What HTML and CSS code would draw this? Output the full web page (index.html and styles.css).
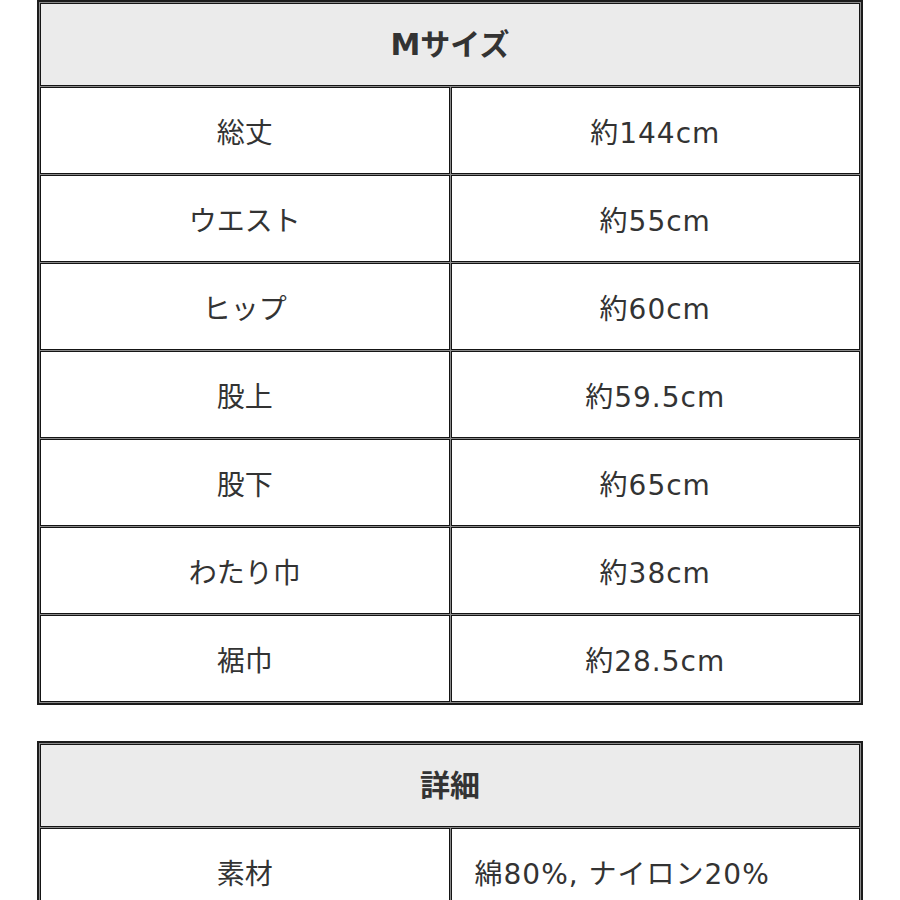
FILE: index.html
```html
<!DOCTYPE html>
<html lang="ja">
<head>
<meta charset="utf-8">
<link rel="stylesheet" href="styles.css">
</head>
<body>
<div class="page">
  <table class="spec">
    <tr><th colspan="2" class="head">Mサイズ</th></tr>
    <tr><td>総丈</td><td class="val">約144cm</td></tr>
    <tr><td>ウエスト</td><td class="val">約55cm</td></tr>
    <tr><td>ヒップ</td><td class="val">約60cm</td></tr>
    <tr><td>股上</td><td class="val">約59.5cm</td></tr>
    <tr><td>股下</td><td class="val">約65cm</td></tr>
    <tr><td>わたり巾</td><td class="val">約38cm</td></tr>
    <tr><td>裾巾</td><td class="val">約28.5cm</td></tr>
  </table>
  <table class="spec">
    <tr><th colspan="2" class="head">詳細</th></tr>
    <tr><td>素材</td><td class="val left">綿80%, ナイロン20%</td></tr>
  </table>
</div>
</body>
</html>
```
FILE: styles.css
```css
html, body {
  margin: 0;
  padding: 0;
  background: #ffffff;
}
.page {
  padding: 0 37px;
  display: flex;
  flex-direction: column;
  gap: 36px;
  font-family: "Liberation Sans", "Noto Sans CJK JP", sans-serif;
  color: #333333;
}
.spec {
  width: 826px;
  border: 2px solid #1c1c1c;
  border-spacing: 1px;
  background: #8a8a8a;
  table-layout: fixed;
}
.spec th, .spec td {
  border: 1px solid #151515;
  background: #ffffff;
  height: 85px;
  padding: 6px 0 0;
  box-sizing: border-box;
  text-align: center;
  vertical-align: middle;
  font-size: 28px;
  font-weight: 400;
  line-height: 1;
}
.spec td {
  height: 87px;
}
.spec th.head {
  background: #ebebeb;
  font-family: "DejaVu Sans", "Noto Sans CJK JP", sans-serif;
  font-weight: 700;
  font-size: 30px;
  height: 83px;
  padding: 0;
}
.spec td.val {
  font-family: "DejaVu Sans", "Noto Sans CJK JP", sans-serif;
  letter-spacing: 1px;
}
.spec td.left {
  text-align: left;
  padding-left: 23px;
}
```
